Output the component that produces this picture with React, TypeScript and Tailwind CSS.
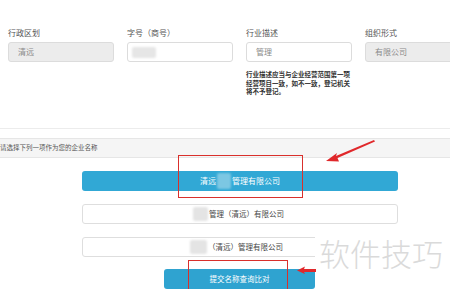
import React from "react";

const font = { fontFamily: '"Noto Sans CJK SC", "Noto Sans", sans-serif' };

const Blur = ({ className }: { className: string }) => (
  <span className={`inline-block rounded-[2px] blur-[1px] ${className}`} />
);

const Field = ({
  label,
  value,
  gray,
  children,
}: {
  label: string;
  value?: React.ReactNode;
  gray?: boolean;
  children?: React.ReactNode;
}) => (
  <div className="w-[106px] shrink-0">
    <div className="h-[10px] text-[8px] leading-[10px] text-[#555] mb-[4px]">{label}</div>
    <div
      className={`h-[20px] rounded-[3px] border border-[#dcdcdc] flex items-center pl-[9px] text-[8px] text-[#8a8a8a] ${
        gray ? "bg-[#ececec]" : "bg-white"
      }`}
    >
      {value}
    </div>
    {children}
  </div>
);

export default function App() {
  return (
    <div className="relative w-[450px] h-[289px] overflow-hidden bg-white" style={font}>
      {/* top form */}
      <div className="h-[129px] border-b border-[#ececec] pt-[28px] pl-[8px] flex gap-[13px]">
        <Field label="行政区划" value="清远" gray />
        <Field label="字号（商号）" value={<Blur className="w-[24px] h-[11px] bg-[#e6e6e6] -ml-[5px]" />} />
        <Field label="行业描述" value="管理">
          <p className="mt-[8px] w-[106px] text-[6.5px] leading-[8.5px] text-[#333] font-bold">
            行业描述应当与企业经营范围第一项经营项目一致，如不一致，登记机关将不予登记。
          </p>
        </Field>
        <Field label="组织形式" value="有限公司" gray />
      </div>

      {/* choice header */}
      <div className="mt-[9px] h-[20px] bg-[#f5f5f5] border-y border-[#e6e6e6] flex items-center text-[6.5px] text-[#555]">
        请选择下列一项作为您的企业名称
      </div>

      {/* choices */}
      <div className="pl-[82px] pt-[13px] flex flex-col">
        <div className="w-[316px] h-[20px] rounded-[3px] bg-[#31a8d5] flex items-center justify-center text-[8px] text-white">
          <span>清远</span>
          <Blur className="w-[14px] h-[16px] bg-[#7cc7e3] mx-[1px]" />
          <span>管理有限公司</span>
        </div>
        <div className="mt-[13px] w-[316px] h-[20px] rounded-[3px] border border-[#dedede] bg-white flex items-center pl-[110px] text-[7.5px] text-[#444]">
          <Blur className="w-[15px] h-[14px] bg-[#e4e4e4] mr-[1px]" />
          <span>管理（清远）有限公司</span>
        </div>
        <div className="mt-[13px] w-[316px] h-[20px] rounded-[3px] border border-[#dedede] bg-white flex items-center pl-[107px] text-[7.5px] text-[#444]">
          <Blur className="w-[17px] h-[14px] bg-[#e4e4e4] mr-[1px]" />
          <span>（清远）管理有限公司</span>
        </div>
        <div className="mt-[12px] ml-[82px] w-[151px] h-[20px] rounded-[3px] bg-[#2fa3d0] flex items-center justify-center text-[7.5px] text-white">
          提交名称查询比对
        </div>
      </div>

      {/* watermark */}
      <div className="absolute left-[315px] top-[229px] w-[135px] h-[60px] bg-white flex items-start pt-[6px] pl-[4px]">
        <span className="text-[31px] leading-[36px] font-light text-[#dadada]">软件技巧</span>
      </div>

      {/* annotations */}
      <div className="absolute left-[178px] top-[155px] w-[125px] h-[43px] border-[1.5px] border-[#d9302c]" />
      <div className="absolute left-[188px] top-[260px] w-[100px] h-[40px] border-[1.5px] border-[#d9302c]" />
      <svg className="absolute left-0 top-0" width="450" height="289">
        <polygon points="374,140 336,156 337,153 326,161 339,161.5 337.5,158 375,141.5" fill="#e0282b" />
        <polygon points="316,269 304,269 305,266.5 297,270.5 305,274 304,272 316,272" fill="#e0282b" />
      </svg>
    </div>
  );
}
